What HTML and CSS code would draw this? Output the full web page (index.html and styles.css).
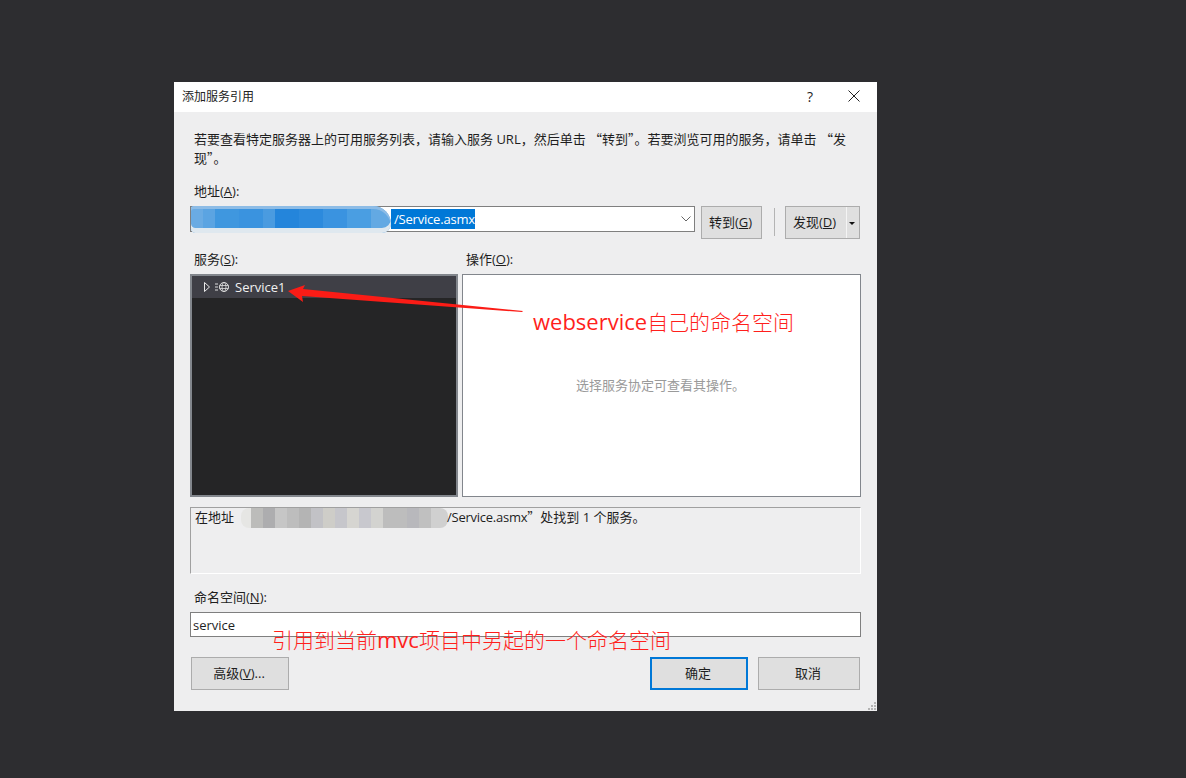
FILE: index.html
```html
<!DOCTYPE html>
<html lang="zh">
<head>
<meta charset="utf-8">
<title>添加服务引用</title>
<link rel="stylesheet" href="styles.css">
</head>
<body>
<div class="dialog">
  <div class="titlebar">
    <span class="title">添加服务引用</span>
    <span class="help">?</span>
    <svg class="close" width="12" height="12" viewBox="0 0 12 12"><path d="M.5.5l11 11M11.5.5l-11 11" stroke="#222" stroke-width="1" fill="none"/></svg>
  </div>
  <div class="content">
    <p class="intro">若要查看特定服务器上的可用服务列表，请输入服务 URL，然后单击 <span class="cjk">“</span>转到<span class="cjk">”。</span>若要浏览可用的服务，请单击 <span class="cjk">“</span>发<br>现<span class="cjk">”。</span></p>
    <div class="label first">地址(<u>A</u>):</div>
    <div class="address-row">
      <div class="address">
        <span class="blur-blue"></span>
        <span class="selected">/Service.asmx</span>
        <svg class="chevron" width="10" height="6" viewBox="0 0 10 6"><path d="M.5.5L5 5 9.500.5" stroke="#666" fill="none"/></svg>
      </div>
      <button class="btn go"><span class="btn-text">转到(<u>G</u>)</span></button>
      <span class="divider"></span>
      <div class="btn split">
        <span class="split-main">发现(<u>D</u>)</span>
        <span class="split-arrow"></span>
      </div>
    </div>
    <div class="pane-labels">
      <div class="label left-label">服务(<u>S</u>):</div>
      <div class="label">操作(<u>O</u>):</div>
    </div>
    <div class="panes">
      <div class="pane-dark">
        <div class="tree-row">
          <svg class="twisty" width="6" height="10" viewBox="0 0 6 10"><path d="M.5.500L5.500 5 .5 9.500z" fill="none" stroke="#e8e8e8"/></svg>
          <svg class="globe" width="15" height="12" viewBox="0 0 15 12"><path d="M0 3h3M0 6h3M0 9h3" stroke="#ddd"/><circle cx="9" cy="6" r="4.500" fill="none" stroke="#ddd"/><ellipse cx="9" cy="6" rx="2" ry="4.500" fill="none" stroke="#ddd" stroke-width=".8"/><path d="M4.500 4.500h9M4.500 7.500h9" stroke="#ddd" stroke-width=".8"/></svg>
          <span class="tree-text">Service1</span>
        </div>
      </div>
      <div class="pane-light"><span class="pane-hint">选择服务协定可查看其操作。</span></div>
    </div>
    <div class="status">
      <span>在地址</span>
      <span class="blur-gray"></span>
      <span><span class="tight">/Service.asmx</span><span class="cjk">”</span>处找到 1 个服务。</span>
    </div>
    <div class="label ns-label">命名空间(<u>N</u>):</div>
    <div class="ns-input">service</div>
    <div class="footer">
      <button class="btn advanced"><span class="btn-text">高级(<u>V</u>)...</span></button>
      <button class="btn ok"><span class="btn-text">确定</span></button>
      <button class="btn cancel"><span class="btn-text">取消</span></button>
    </div>
  </div>
  <svg class="grip" width="10" height="10" viewBox="0 0 10 10"><path d="M7 1h2v2H7zM4 4h2v2H4zM7 4h2v2H7zM1 7h2v2H1zM4 7h2v2H4zM7 7h2v2H7z" fill="#b4b4b4"/></svg>
</div>
<svg class="arrow" width="240" height="32" viewBox="0 0 240 32"><path d="M0 6L17 0 15 4 235 26 234 27 14 11 15 17z" fill="#fb1c16"/></svg>
<div class="note note-one"><span class="latin">webservice</span>自己的命名空间</div>
<div class="note note-two">引用到当前<span class="latin">mvc</span>项目中另起的一个命名空间</div>
</body>
</html>
```
FILE: styles.css
```css
* { box-sizing: border-box; }
html, body { margin: 0; height: 100%; }
body {
  background: #2d2d30;
  padding: 82px 0 0 174px;
  font-family: "Open Sans", "Noto Sans CJK SC", sans-serif;
  font-size: 13px;
  color: #1e1e1e;
  overflow: hidden;
}
.cjk { font-family: "Noto Sans CJK SC", sans-serif; line-height: 0; }
.tight { letter-spacing: -.25px; }
.dialog {
  position: relative;
  width: 703px;
  height: 629px;
  background: #eeeeef;
  display: flex;
  flex-direction: column;
}
.titlebar {
  height: 30px;
  flex: none;
  background: #fff;
  display: flex;
  align-items: center;
  padding: 0 17px 2px 8px;
}
.title { font-size: 12px; flex: 1; color: #222; }
.help { margin-right: 35px; font-size: 14px; }
.content { padding: 0 16px; display: flex; flex-direction: column; }
.intro { margin: 18px 0 0 4px; height: 38px; line-height: 19px; white-space: nowrap; }
.label { line-height: 19px; margin-left: 4px; }
.first { margin-top: 14px; }
.address-row { margin-top: 5px; display: flex; align-items: flex-start; height: 33px; }
.address {
  width: 505px;
  height: 26px;
  border: 1px solid #7f7f7f;
  background: #fff;
  display: flex;
  align-items: center;
  position: relative;
}
.blur-blue {
  width: 200px;
  height: 27px;
  flex: none;
  border-radius: 4px 24px 12px 6px;
  background: linear-gradient(90deg,
    #6aabe3 0 12px, #5ba4e2 12px 24px, #3f97df 24px 48px, #3a93df 48px 72px,
    #4a9be0 72px 84px, #2485db 84px 108px, #2c8add 108px 132px, #3a93e0 132px 156px,
    #4a9ee2 156px 180px, #63a9e3 180px);
  box-shadow: inset 0 -5px 0 #dfe8ef, inset 0 3px 0 #8dbce6;
}
.selected {
  background: #0078d7;
  color: #fff;
  height: 20px;
  line-height: 20px;
  padding: 0 0 0 3px;
  letter-spacing: -.2px;
}
.chevron { position: absolute; right: 3px; top: 9px; }
.btn {
  font: inherit;
  color: inherit;
  background: #dfdfdf;
  border: 1px solid #acacac;
  height: 33px;
  padding: 0;
  display: flex;
  align-items: center;
  justify-content: center;
}
.btn-text { margin: -2px 2px 0 0; }
.go { width: 61px; margin-left: 6px; }
.divider { width: 1px; height: 28px; margin: 2px 10px 0 12px; background: #b4b4b4; }
.split { width: 75px; }
.split-main { width: 61px; padding-right: 3px; text-align: center; border-right: 1px solid #f4f4f4; height: 31px; line-height: 30px; }
.split-arrow {
  width: 0;
  height: 0;
  margin-left: 2px;
  border: 3px solid transparent;
  border-top: 3px solid #111;
  margin-top: 4px;
  margin-right: auto;
}
.pane-labels { margin-top: 11px; display: flex; }
.left-label { width: 268px; }
.panes { margin-top: 5px; display: flex; gap: 4px; height: 223px; }
.pane-dark { width: 268px; background: #252526; border: 2px solid #82868c; }
.tree-row { height: 22px; background: #3f3f46; display: flex; align-items: center; padding-left: 12px; color: #f1f1f1; }
.globe { margin-left: 5px; }
.tree-text { margin-left: 5px; }
.pane-light {
  width: 399px;
  background: #fff;
  border: 1px solid #82868c;
  display: flex;
  align-items: center;
  justify-content: center;
  color: #9a9a9a;
}
.pane-hint { margin: -2px 2px 0 0; }
.status {
  margin-top: 10px;
  height: 67px;
  border: 1px solid #fff;
  border-top-color: #a0a0a0;
  border-left-color: #a0a0a0;
  display: flex;
  align-items: flex-start;
  padding-left: 4px;
  line-height: 19px;
}
.blur-gray {
  width: 207px;
  height: 20px;
  margin: 0 -1px 0 7px;
  flex: none;
  border-radius: 8px;
  background: linear-gradient(90deg,
    #e6e6e4 0 10px, #bcbcba 10px 22px, #adadaf 22px 34px, #c6c6c6 34px 46px,
    #bdbdbd 46px 58px, #b4b4b4 58px 70px, #c2c2c6 70px 82px, #cecdc8 82px 94px,
    #c6c6cb 94px 106px, #d6d5d1 106px 118px, #c8c8ce 118px 130px, #d3d3d0 130px 142px,
    #bdbdbd 142px 166px, #b8b8bc 166px 178px, #c0c0c0 178px 190px, #d0d0d0 190px);
}
.ns-label { margin-top: 14px; }
.ns-input {
  margin-top: 5px;
  height: 25px;
  border: 1px solid #7f7f7f;
  background: #fff;
  line-height: 24px;
  padding-left: 2px;
}
.footer { margin-top: 20px; display: flex; padding: 0 1px; }
.advanced { width: 98px; margin-right: auto; }
.ok { width: 98px; border: 2px solid #0078d7; margin-right: 10px; }
.cancel { width: 102px; }
.grip { position: absolute; right: 0; bottom: 0; }
.arrow { position: absolute; left: 288px; top: 285px; }
.note {
  position: absolute;
  color: #ff1f1c;
  font-family: "Noto Sans CJK SC", sans-serif;
  font-weight: 300;
  font-size: 21px;
  white-space: nowrap;
  line-height: 28px;
}
.latin { font-family: "Open Sans", sans-serif; font-size: 22px; font-weight: 400; }
.note-one { left: 533px; top: 307px; }
.note-two { left: 272px; top: 625px; }
```
